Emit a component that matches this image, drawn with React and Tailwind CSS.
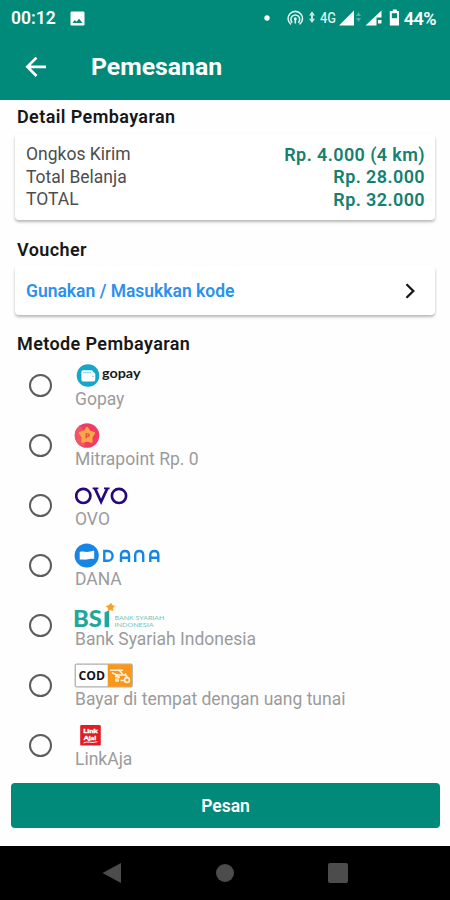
import React, { useState } from 'react'

const GopayLogo = () => (
  <svg width="70" height="24" viewBox="0 0 70 24">
    <circle cx="13" cy="12.5" r="11.3" fill="#14a7cb" />
    <path d="M8 7.2h8.5a2 2 0 0 1 1.6 1.7l1.3.8a2 2 0 0 1 .9 1.7v5a2.2 2.2 0 0 1-2.2 2.2H8.6a2.2 2.2 0 0 1-2.2-2.2V9a1.8 1.8 0 0 1 1.6-1.8z" fill="#fff" />
    <path d="M8 9.7h8M17 13.3h2" stroke="#7fd0e2" strokeWidth="1" />
    <text x="27" y="15.2" textLength="38.5" lengthAdjust="spacingAndGlyphs" fontFamily="Lato, sans-serif" fontWeight="700" fontSize="12.5" fill="#17191b">gopay</text>
  </svg>
)

const MitrapointLogo = () => (
  <svg width="26" height="24" viewBox="0 0 26 24" className="overflow-visible">
    <circle cx="12" cy="12.5" r="12.3" fill="#ee3c64" />
    <path d="M5 2.5a12.3 12.3 0 0 0 4 21.9L12 13z" fill="#f25565" />
    <path d="M12 4.7l2.6 3.8 4.6 1.4-2.7 4 .1 5-4.6-1.3-4.6 1.3.1-5-2.7-4 4.6-1.4z" fill="#fda749" stroke="#fda749" strokeWidth="2" strokeLinejoin="round" />
    <path d="M11.2 15.6v-4.8h1.8a1.3 1.3 0 0 1 0 2.6h-1.8" fill="none" stroke="#d6533b" strokeWidth="1.3" />
  </svg>
)

const OvoLogo = () => (
  <svg width="56" height="24" viewBox="0 0 56 24">
    <g fill="none" stroke="#27077e" strokeWidth="2.7">
      <circle cx="8.3" cy="12.9" r="7.1" />
      <circle cx="44" cy="12.9" r="7.1" />
      <path d="M20 5.6l6.1 13.2 6.1-13.2" />
    </g>
    <path d="M17.6 5.4h5.8M29 5.4h5.6" stroke="#27077e" strokeWidth="1.6" />
  </svg>
)

const DanaLogo = () => (
  <svg width="88" height="24" viewBox="0 0 88 24" className="overflow-visible">
    <circle cx="11.7" cy="12.5" r="12.1" fill="#1685e3" />
    <path d="M4.7 9.1c3.3-1.2 6 .3 9.3-.3 2.2-.5 3.7-1.6 5.2-1v8c-3.1-.5-5.2.4-7.4.7-2.8.4-4.3-.3-7.1.2z" fill="#fff" />
    <g fill="none" stroke="#1685e3" strokeWidth="2.4">
      <path d="M29.3 8h3.4a4.9 4.9 0 0 1 0 9.8h-3.4z" />
      <path d="M46 19v-7q0-4 4-4t4 4v7M46 14.8h8" />
      <path d="M60.2 19v-7q0-4 4-4t4 4v7" />
      <path d="M75.3 19v-7q0-4 4-4t4 4v7M75.3 14.8h8" />
    </g>
  </svg>
)

const BsiLogo = () => (
  <svg width="92" height="24" viewBox="0 0 92 24" className="overflow-visible">
    <text x="-2" y="24.3" textLength="29" lengthAdjust="spacingAndGlyphs" fontFamily="Lato, sans-serif" fontWeight="900" fontSize="23" fill="#22a69a">BS</text>
    <path d="M29.6 9.3l4.6-1.8v16.8h-4.6z" fill="#22a69a" />
    <path d="M36 .2l1.2 2.2 2.5.8-2 1.8.2 2.6-2.4-.8-2.4.8.2-2.6-2-1.8 2.6-.8z" fill="#f6a127" stroke="#f6a127" strokeWidth=".7" />
    <g fontFamily="Lato, sans-serif" fontSize="6.2" fill="#72c4bc">
      <text x="39.5" y="17.3" textLength="50" lengthAdjust="spacingAndGlyphs">BANK SYARIAH</text>
      <text x="39.5" y="24.4" textLength="39" lengthAdjust="spacingAndGlyphs">INDONESIA</text>
    </g>
  </svg>
)

const CodLogo = () => (
  <svg width="60" height="24" viewBox="0 0 60 24" className="overflow-visible">
    <rect x=".2" y="1.1" width="57" height="22.8" rx="1" fill="#fff" stroke="#999" strokeWidth="1" />
    <path d="M32.7 1.3h24.2v22.4H32.7z" fill="#fa9718" />
    <text x="3.6" y="17.4" textLength="26.5" lengthAdjust="spacingAndGlyphs" fontFamily="'Open Sans', sans-serif" fontWeight="700" fontSize="13" fill="#151515">COD</text>
    <g fill="none" stroke="#fff3df" strokeWidth="1.6">
      <path d="M35 7.3h13M37 9.8l5 2.2h9M40 13.2l5 1.2M50 10.5l2.5 4.5" />
      <circle cx="42" cy="17" r="1.3" />
      <circle cx="52" cy="17" r="2.4" />
      <path d="M44 7l3.5 4M45.5 17.5h4" />
    </g>
  </svg>
)

const LinkAjaLogo = () => (
  <svg width="28" height="24" viewBox="0 0 28 24">
    <rect x="5.2" y="2" width="20.6" height="20.6" rx="1.4" fill="#e01d24" />
    <g fill="#fff" fontFamily="Lato, sans-serif" fontWeight="900" fontSize="6.4" stroke="#fff" strokeWidth=".4">
      <text x="8.3" y="9.8" textLength="14.5" lengthAdjust="spacingAndGlyphs">Link</text>
      <text x="8.8" y="17.2" textLength="12.5" lengthAdjust="spacingAndGlyphs">Aja!</text>
    </g>
    <path d="M8.5 20q3-1.5 6-.8t8-.5" fill="none" stroke="#fff" strokeWidth=".9" />
  </svg>
)

const methods = [
  { id: 'gopay', label: 'Gopay', logo: <GopayLogo /> },
  { id: 'mitrapoint', label: 'Mitrapoint Rp. 0', logo: <MitrapointLogo /> },
  { id: 'ovo', label: 'OVO', logo: <OvoLogo /> },
  { id: 'dana', label: 'DANA', logo: <DanaLogo /> },
  { id: 'bsi', label: 'Bank Syariah Indonesia', logo: <BsiLogo /> },
  { id: 'cod', label: 'Bayar di tempat dengan uang tunai', logo: <CodLogo /> },
  { id: 'linkaja', label: 'LinkAja', logo: <LinkAjaLogo /> },
]

const costs = [
  { name: 'Ongkos Kirim', value: 'Rp. 4.000 (4 km)' },
  { name: 'Total Belanja', value: 'Rp. 28.000' },
  { name: 'TOTAL', value: 'Rp. 32.000' },
]

const StatusBar = () => (
  <div className="flex h-9 items-center pl-[11px] pr-[14px] text-white">
    <span className="pt-[2px] text-[17.5px] font-semibold leading-none">00:12</span>
    <svg className="ml-[14px]" width="15" height="15" viewBox="0 0 15 15">
      <rect x=".5" y=".5" width="14" height="14" rx="1.2" fill="#fff" />
      <path d="M2.5 12l2.3-3 1.7 1.8 2.6-3.1 3.4 4.3z" fill="#018979" />
    </svg>
    <svg className="ml-auto shrink-0" width="137" height="20" viewBox="0 0 137 20">
      <circle cx="3" cy="10" r="2.7" fill="#fff" />
      <g fill="none" stroke="#e0f3ef" strokeWidth="1.6">
        <path d="M27 16.3a7.2 7.2 0 1 1 8.6 0" />
        <path d="M28.3 14.6a4.4 4.4 0 1 1 6 0" />
        <path d="M31.3 11v4.5" />
      </g>
      <circle cx="31.3" cy="10.8" r="1.5" fill="#e0f3ef" />
      <path d="M48 3.2l3 4.3h-6zM48 15l3-4.3h-6z" fill="#c5e6e1" />
      <path d="M47 7h2v4h-2z" fill="#c5e6e1" />
      <text x="56" y="14.5" textLength="16" lengthAdjust="spacingAndGlyphs" fontSize="14" fontWeight="500" fill="#d8efeb">4G</text>
      <path d="M90 2.5V17.5H75z" fill="#fff" />
      <path d="M94.5 4l2.5 4h-5zM94.5 14l2.5-4h-5z" fill="#54b0a5" />
      <path d="M117.5 2.5v7h-5v8H101.5z" fill="#fff" />
      <path d="M114 12h3.5v3.5H114z" fill="#fff" />
      <path d="M127 3h1.8V1.5h4V3h2.2v14.5H125.8V3z" fill="#fff" />
      <path d="M127.8 5.2h5.2v5h-5.2z" fill="#018979" />
    </svg>
    <span className="ml-[3px] pt-px text-[18px] font-semibold leading-none tracking-[-0.5px]">44%</span>
  </div>
)

const SectionTitle = ({ children }) => (
  <h2 className="text-[18px] font-semibold leading-[24px] tracking-[0.4px] text-[#171717]">{children}</h2>
)

const App = () => {
  const [selected, setSelected] = useState(null)

  return (
    <div className="flex h-[900px] w-[450px] flex-col overflow-hidden bg-[#fefefe] font-['Roboto',sans-serif]">
      <header className="h-[100px] shrink-0 bg-[#018979]">
        <StatusBar />
        <div className="flex h-[62px] items-center pl-[25px] text-white">
          <svg width="22" height="22" viewBox="0 0 22 22" fill="none" stroke="#fff" strokeWidth="2.7">
            <path d="M21 10.8H3M11.5 1.6L2.3 10.8l9.2 9.2" />
          </svg>
          <h1 className="ml-[44px] text-[24.8px] font-bold leading-none">Pemesanan</h1>
        </div>
      </header>

      <main className="flex flex-col">
        <div className="px-[15px] pt-[5px]">
          <div className="pl-[2px]">
            <SectionTitle>Detail Pembayaran</SectionTitle>
          </div>
          <div className="mt-[5px] h-[86px] rounded-[4px] bg-white px-[11px] pt-[9px] shadow-[0_2px_3px_rgba(0,0,0,0.28)]">
            {costs.map((cost) => (
              <div key={cost.name} className="flex h-[22.5px] items-center justify-between">
                <span className="text-[17.5px] text-[#4d4d4d]">{cost.name}</span>
                <span className="-mr-px text-[18px] font-semibold tracking-[0.4px] text-[#15806f]">{cost.value}</span>
              </div>
            ))}
          </div>
          <div className="mt-[18px] pl-[2px]">
            <SectionTitle>Voucher</SectionTitle>
          </div>
          <button className="mt-[4px] flex h-[49px] w-full items-center justify-between rounded-[4px] bg-white pl-[11px] pr-[19px] shadow-[0_2px_3px_rgba(0,0,0,0.28)]">
            <span className="pt-[2px] text-[17.5px] font-semibold text-[#2c91ed]">Gunakan / Masukkan kode</span>
            <svg width="12" height="16" viewBox="0 0 12 16" fill="none" stroke="#171717" strokeWidth="2.3">
              <path d="M2.5 1.2L9.3 8l-6.8 6.8" />
            </svg>
          </button>
          <div className="mt-[17px] pl-[2px]">
            <SectionTitle>Metode Pembayaran</SectionTitle>
          </div>
        </div>

        <div className="-mt-px flex flex-col">
          {methods.map((method) => (
            <label key={method.id} className="flex h-[60px] cursor-pointer pl-[29px]">
              <input
                type="radio"
                name="method"
                className="sr-only"
                checked={selected === method.id}
                onChange={() => setSelected(method.id)}
              />
              <span className="mt-[19px] flex h-[23px] w-[23px] items-center justify-center rounded-full border-[2.5px] border-[#5c5c5c]">
                {selected === method.id && <span className="h-3 w-3 rounded-full bg-[#018979]" />}
              </span>
              <span className="ml-[23px] flex flex-col pt-2">
                <span className="flex h-6 items-end">{method.logo}</span>
                <span className="mt-px text-[17.5px] leading-[22px] text-[#9b9b9b]">{method.label}</span>
              </span>
            </label>
          ))}
        </div>
      </main>

      <div className="mt-auto pb-[18px] pl-[11px] pr-[10px]">
        <button className="h-[45px] w-full rounded-[4px] bg-[#018979] pt-[2px] text-[17.5px] font-semibold text-white">
          Pesan
        </button>
      </div>
      <nav className="flex h-[54px] shrink-0 items-center justify-between bg-black px-[102px]">
        <svg width="20" height="22" viewBox="0 0 20 22">
          <path d="M19 1v20L0.5 11z" fill="#4c4c4c" />
        </svg>
        <span className="h-[18px] w-[18px] rounded-full bg-[#4c4c4c]" />
        <span className="h-5 w-5 rounded-[2px] bg-[#4c4c4c]" />
      </nav>
    </div>
  )
}

export default App
